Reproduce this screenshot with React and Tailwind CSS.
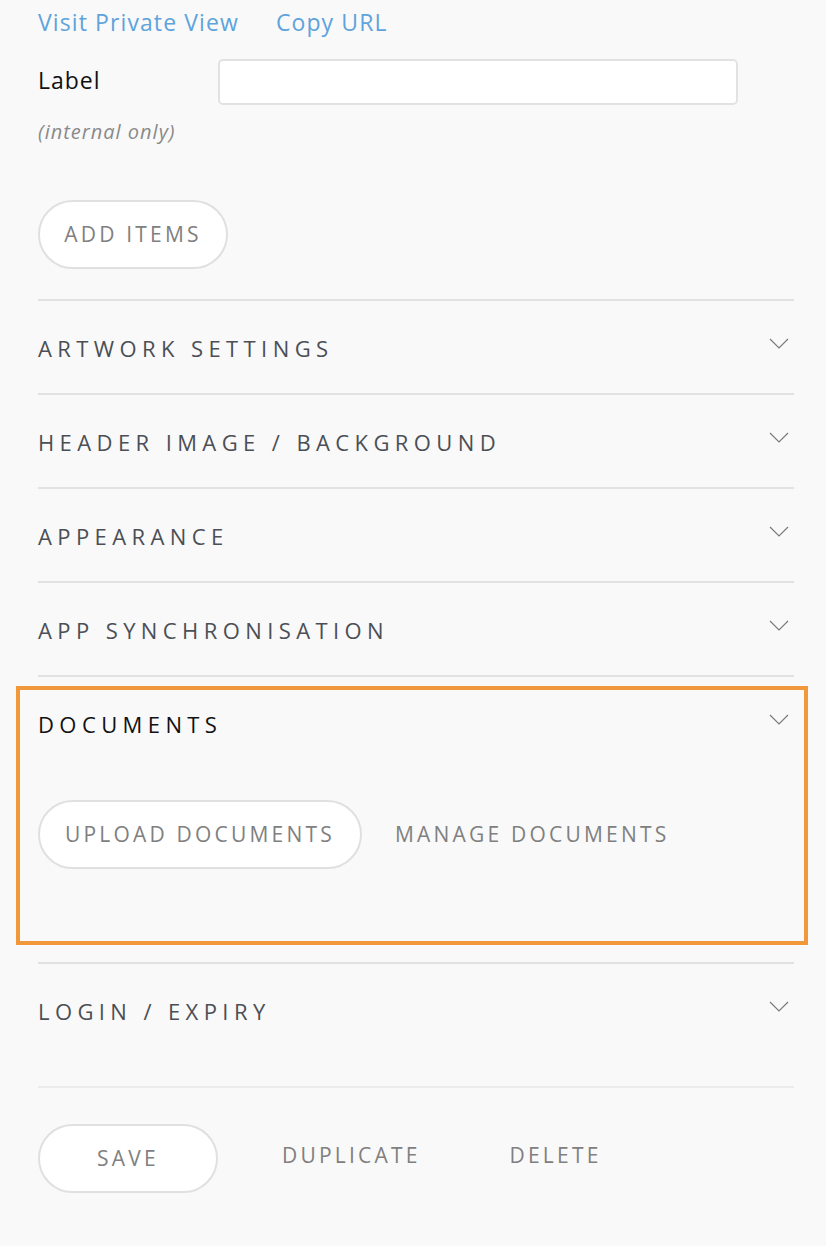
const font = { fontFamily: "'Open Sans', Lato, sans-serif" };

function Chevron() {
  return (
    <svg width="20" height="11" viewBox="0 0 20 11" className="shrink-0 mt-[-10px]">
      <path d="M1 1 L10 10 L19 1" fill="none" stroke="#7a7a7a" strokeWidth="1.2" />
    </svg>
  );
}

function Section({ title, tall }) {
  return (
    <div className={`border-t-2 border-[#e2e2e2] ${tall ? "h-[124px]" : "h-[94px]"}`}>
      <div className="h-[92px] pt-[2px] flex items-center justify-between pr-[5px]">
        <span className="text-[22px] leading-[30px] tracking-[5.4px] text-[#4b4f55]">{title}</span>
        <Chevron />
      </div>
    </div>
  );
}

function PillButton({ children, className = "" }) {
  return (
    <button
      type="button"
      className={`h-[69px] rounded-full border-2 border-[#e0e0e0] bg-white text-[21px] tracking-[3.2px] text-[#808080] ${className}`}
    >
      {children}
    </button>
  );
}

export default function App() {
  return (
    <div className="min-h-[1246px] bg-[#f9f9f9] pr-[32px] pl-[38px]" style={font}>
      <div className="flex gap-[37px] pt-[7px] text-[23px] leading-[30px] tracking-[1.1px] text-[#5ea3dc]">
        <a>Visit Private View</a>
        <a>Copy URL</a>
      </div>

      <div className="flex items-center mt-[22px]">
        <span className="w-[180px] -mt-[3px] text-[23px] tracking-[1px] text-[#111]">Label</span>
        <input className="w-[520px] h-[46px] rounded-[5px] border-2 border-[#e2e2e2] bg-white outline-none" />
      </div>
      <p className="mt-[13px] text-[20px] leading-[28px] tracking-[1px] italic text-[#8a8a8a]">
        (internal only)
      </p>

      <PillButton className="mt-[54px] w-[190px]">ADD ITEMS</PillButton>

      <div className="mt-[30px]">
        <Section title="ARTWORK SETTINGS" />
        <Section title="HEADER IMAGE / BACKGROUND" />
        <Section title="APPEARANCE" />
        <Section title="APP SYNCHRONISATION" />

        <div className="border-t-2 border-[#e2e2e2] pt-[9px] pb-[17px]">
          <div className="-ml-[22px] w-[792px] h-[259px] border-4 border-[#f0983a] pl-[18px] pr-[15px]">
            <div className="flex items-center justify-between h-[68px]">
              <span className="text-[22px] leading-[30px] tracking-[5.4px] text-[#111]">DOCUMENTS</span>
              <Chevron />
            </div>
            <div className="flex items-center gap-[33px] mt-[42px]">
              <PillButton className="w-[324px]">UPLOAD DOCUMENTS</PillButton>
              <span className="text-[21px] tracking-[3.2px] text-[#808080]">MANAGE DOCUMENTS</span>
            </div>
          </div>
        </div>

        <Section title="LOGIN / EXPIRY" tall />

        <div className="border-t-2 border-[#ececec] pt-[36px] flex items-center">
          <PillButton className="w-[180px]">SAVE</PillButton>
          <span className="ml-[64px] -mt-[5px] text-[21px] tracking-[3.2px] text-[#808080]">DUPLICATE</span>
          <span className="ml-[89px] -mt-[5px] text-[21px] tracking-[3.2px] text-[#808080]">DELETE</span>
        </div>
      </div>
    </div>
  );
}
